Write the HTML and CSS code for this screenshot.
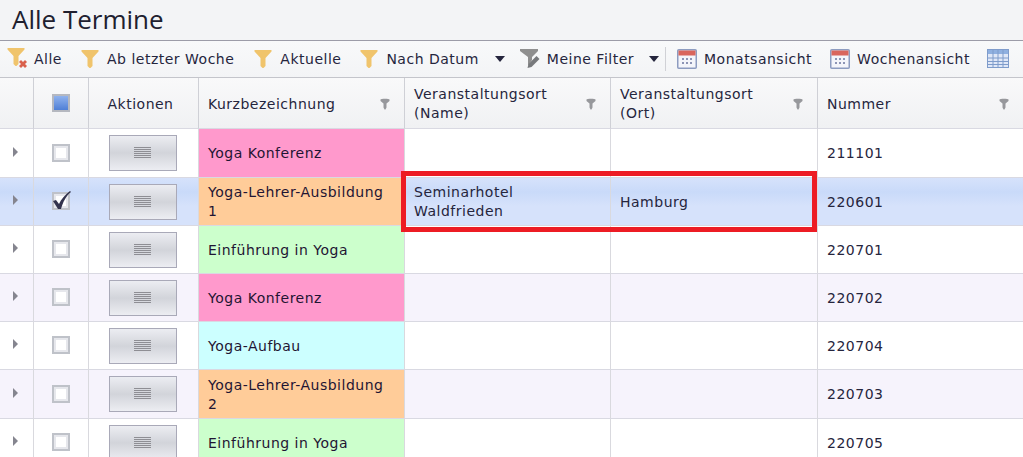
FILE: index.html
```html
<!DOCTYPE html>
<html>

<head>
    <meta charset="UTF-8">
    <title>Alle Termine</title>
    <link rel="stylesheet" href="styles.css">
</head>

<body>
    <svg class="defs" width="0" height="0">
        <symbol id="funnel" viewBox="0 0 18 20">
            <path d="M0.500 1h17v1.500l-6 6.500v8l-2 2h-1l-2-2v-8l-6-6.500z" fill="#f0c46c" />
        </symbol>
        <symbol id="cal" viewBox="0 0 20 20">
            <rect x="0.750" y="0.750" width="18.500" height="18.500" rx="1" fill="#f4f5fa" stroke="#8d9cc0" stroke-width="1.500" />
            <rect x="1.500" y="1.500" width="17" height="5" fill="#d9655c" />
            <path d="M5 9h2v2h-2zM9 9h2v2h-2zM13 9h2v2h-2zM5 13h2v2h-2zM9 13h2v2h-2zM13 13h2v2h-2z" fill="#8d94b5" />
        </symbol>
        <symbol id="lines" viewBox="0 0 17 12">
            <path d="M0 0h17v1h-17zM0 2h17v1h-17zM0 4h17v1h-17zM0 6h17v1h-17zM0 8h17v1h-17zM0 10h17v1h-17z" fill="#8e8e94" />
        </symbol>
        <symbol id="hfilter" viewBox="0 0 10 12">
            <path d="M0.500 1.500c0-1 9-1 9 0v1.500l-3 2.500v4l-1 2h-1l-1-2v-4l-3-2.500z" fill="#97989c" />
        </symbol>
    </svg>

    <div class="page">
        <h1 class="title">Alle Termine</h1>

        <div class="toolbar">
            <span class="tool tool-clear">
                <svg class="ico" width="22" height="24" viewBox="0 0 22 24">
                    <use href="#funnel" width="18" height="20" />
                    <path d="M12 15l2-2 2 2 2-2 2 2-2 2 2 2-2 2-2-2-2 2-2-2 2-2z" fill="#d9604c" />
                </svg>Alle
            </span>
            <span class="tool tool-woche"><svg class="ico" width="18" height="20"><use href="#funnel" /></svg>Ab letzter Woche</span>
            <span class="tool tool-akt"><svg class="ico" width="18" height="20"><use href="#funnel" /></svg>Aktuelle</span>
            <span class="tool tool-datum"><svg class="ico" width="18" height="20"><use href="#funnel" /></svg>Nach Datum</span>
            <span class="caret caret-a"></span>
            <span class="tool tool-meine">
                <svg class="ico" width="20" height="20" viewBox="0 0 20 20">
                    <path d="M0 0h18v2l-6 6v3l-4 6v-9l-8-6z" fill="#8f8f8f" />
                    <path d="M7.500 19l1-4 8-8 3 3-8 8z" fill="#77797c" />
                </svg>Meine Filter
            </span>
            <span class="caret caret-b"></span>
            <span class="sep"></span>
            <span class="tool tool-monat"><svg class="ico" width="20" height="20"><use href="#cal" /></svg>Monatsansicht</span>
            <span class="tool tool-wochen"><svg class="ico" width="20" height="20"><use href="#cal" /></svg>Wochenansicht</span>
            <svg class="grid-ico" width="22" height="20" viewBox="0 0 22 20">
                <rect x="0.500" y="0.500" width="21" height="18" fill="#dfe7f7" stroke="#7f9ccb" />
                <rect x="1" y="1" width="20" height="4" fill="#8fb0e0" />
                <path d="M1 9h20M1 12.500h20M1 15.500h20M6 1v18M11 1v18M16 1v18" stroke="#7f9ccb" fill="none" />
            </svg>
        </div>

        <table class="grid">
            <colgroup>
                <col class="c-exp">
                <col class="c-chk">
                <col class="c-act">
                <col class="c-kurz">
                <col class="c-name">
                <col class="c-ort">
                <col class="c-num">
            </colgroup>
            <thead>
                <tr>
                    <th></th>
                    <th class="center"><span class="chk chk-all"></span></th>
                    <th class="center th-act">Aktionen</th>
                    <th>Kurzbezeichnung<svg class="hf" width="10" height="12"><use href="#hfilter" /></svg></th>
                    <th>Veranstaltungsort<br>(Name)<svg class="hf" width="10" height="12"><use href="#hfilter" /></svg></th>
                    <th>Veranstaltungsort<br>(Ort)<svg class="hf" width="10" height="12"><use href="#hfilter" /></svg></th>
                    <th>Nummer<svg class="hf" width="10" height="12"><use href="#hfilter" /></svg></th>
                </tr>
            </thead>
            <tbody>
                <tr class="h49">
                    <td><span class="arrow"></span></td>
                    <td class="center"><span class="chk"></span></td>
                    <td class="center"><span class="btn"><svg width="17" height="12"><use href="#lines" /></svg></span></td>
                    <td class="pink">Yoga Konferenz</td>
                    <td></td>
                    <td></td>
                    <td>211101</td>
                </tr>
                <tr class="sel">
                    <td><span class="arrow"></span></td>
                    <td class="center">
                        <span class="chk">
                            <svg class="tick" width="20" height="20" viewBox="0 0 20 20"><path d="M1 10l3-1 3 4c2-5 6-9 11-13l1 1c-5 4-8 10-10 17h-3z" fill="#33334d" /></svg>
                        </span>
                    </td>
                    <td class="center"><span class="btn"><svg width="17" height="12"><use href="#lines" /></svg></span></td>
                    <td class="orange">Yoga-Lehrer-Ausbildung 1</td>
                    <td>Seminarhotel Waldfrieden</td>
                    <td>Hamburg</td>
                    <td>220601</td>
                </tr>
                <tr>
                    <td><span class="arrow"></span></td>
                    <td class="center"><span class="chk"></span></td>
                    <td class="center"><span class="btn"><svg width="17" height="12"><use href="#lines" /></svg></span></td>
                    <td class="green">Einführung in Yoga</td>
                    <td></td>
                    <td></td>
                    <td>220701</td>
                </tr>
                <tr class="alt">
                    <td><span class="arrow"></span></td>
                    <td class="center"><span class="chk"></span></td>
                    <td class="center"><span class="btn"><svg width="17" height="12"><use href="#lines" /></svg></span></td>
                    <td class="pink">Yoga Konferenz</td>
                    <td></td>
                    <td></td>
                    <td>220702</td>
                </tr>
                <tr>
                    <td><span class="arrow"></span></td>
                    <td class="center"><span class="chk"></span></td>
                    <td class="center"><span class="btn"><svg width="17" height="12"><use href="#lines" /></svg></span></td>
                    <td class="cyan">Yoga-Aufbau</td>
                    <td></td>
                    <td></td>
                    <td>220704</td>
                </tr>
                <tr class="alt h49">
                    <td><span class="arrow"></span></td>
                    <td class="center"><span class="chk"></span></td>
                    <td class="center"><span class="btn"><svg width="17" height="12"><use href="#lines" /></svg></span></td>
                    <td class="orange">Yoga-Lehrer-Ausbildung 2</td>
                    <td></td>
                    <td></td>
                    <td>220703</td>
                </tr>
                <tr>
                    <td><span class="arrow"></span></td>
                    <td class="center"><span class="chk"></span></td>
                    <td class="center"><span class="btn"><svg width="17" height="12"><use href="#lines" /></svg></span></td>
                    <td class="green">Einführung in Yoga</td>
                    <td></td>
                    <td></td>
                    <td>220705</td>
                </tr>
            </tbody>
        </table>

        <div class="mark"></div>
    </div>
</body>

</html>
```

FILE: styles.css
```css
html, body {
    margin: 0;
    height: 100%;
    overflow: hidden;
}

body {
    background: #f3f4f6;
    color: #25253d;
    font-family: "DejaVu Sans", sans-serif;
    font-size: 14px;
    letter-spacing: 0.5px;
}

.defs {
    display: block;
    height: 0;
}

.page {
    position: relative;
    width: 1023px;
    height: 457px;
    overflow: hidden;
}

.title {
    margin: 0;
    height: 40px;
    box-sizing: border-box;
    padding: 2px 0 0 12px;
    font-family: "Open Sans", sans-serif;
    font-weight: 400;
    font-size: 26px;
    line-height: 35px;
    letter-spacing: 0;
    color: #20202f;
}

.toolbar {
    display: flex;
    align-items: center;
    box-sizing: border-box;
    height: 38px;
    padding-left: 7px;
    border-top: 1px solid #9c9ca8;
    border-bottom: 1px solid #c4c5cb;
    background: linear-gradient(#f8f9fa, #f3f4f6);
    white-space: nowrap;
}

.tool {
    display: flex;
    align-items: center;
}

.ico {
    flex: none;
    margin-right: 8px;
}

.tool-clear .ico {
    margin-right: 5px;
}

.tool-woche {
    margin-left: 19px;
}

.tool-akt {
    margin-left: 20px;
}

.tool-datum {
    margin-left: 19px;
}

.tool-meine {
    margin-left: 15px;
}

.tool-meine .ico {
    margin-right: 7px;
}

.tool-monat {
    margin-left: 11px;
}

.tool-monat .ico,
.tool-wochen .ico {
    margin-right: 7px;
}

.tool-wochen {
    margin-left: 18px;
}

.grid-ico {
    margin-left: 17px;
}

.caret {
    width: 0;
    height: 0;
    border-left: 5px solid transparent;
    border-right: 5px solid transparent;
    border-top: 6px solid #25253d;
}

.caret-a {
    margin-left: 16px;
}

.caret-b {
    margin-left: 15px;
}

.sep {
    width: 1px;
    height: 24px;
    margin-left: 6px;
    background: #d0d1d6;
}

.grid {
    width: 1023px;
    table-layout: fixed;
    border-collapse: separate;
    border-spacing: 0;
    background: #fff;
}

.c-exp { width: 34px; }
.c-chk { width: 55px; }
.c-act { width: 110px; }
.c-kurz { width: 206px; }
.c-name { width: 206px; }
.c-ort { width: 207px; }

.grid th,
.grid td {
    box-sizing: border-box;
    padding: 1px 9px 0;
    border-right: 1px solid #d9d9de;
    border-bottom: 1px solid #d9d9e2;
    text-align: left;
    font-weight: 400;
    line-height: 19px;
    vertical-align: middle;
}

.grid th:last-child,
.grid td:last-child {
    border-right: 0;
}

.grid th {
    position: relative;
    height: 51px;
    padding-top: 2px;
    padding-right: 30px;
    background: linear-gradient(#f9f9fa, #f0f1f3);
    border-right-color: #cfd0d6;
}

.grid .center {
    padding: 0;
    text-align: center;
}

.grid .th-act {
    padding: 2px 6px 0 0;
}

.grid tbody tr {
    height: 48px;
}

.grid tbody tr.h49 {
    height: 49px;
}

.grid tr.alt td {
    background: #f6f3fc;
}

.grid tr.sel td {
    background: linear-gradient(#d6e2fb, #c9daf9 30%, #d6e2fb 60%);
}

.grid tbody td.pink { background: #ff99cc; color: #1f1533; }
.grid tbody td.orange { background: #ffcc99; color: #1f1533; }
.grid tbody td.green { background: #ccffcc; color: #1f1533; }
.grid tbody td.cyan { background: #ccffff; color: #1f1533; }

.hf {
    position: absolute;
    right: 14px;
    top: 20px;
}

.arrow {
    display: block;
    width: 0;
    height: 0;
    margin-left: 4px;
    margin-top: -4px;
    border-top: 5px solid transparent;
    border-bottom: 5px solid transparent;
    border-left: 5px solid #85858f;
}

.chk {
    position: relative;
    display: inline-block;
    box-sizing: border-box;
    width: 18px;
    height: 18px;
    margin-top: -2px;
    vertical-align: middle;
    background: #fff;
    border: 2px solid #bfc2c9;
    box-shadow: inset 0 0 0 2px #e6e7ec;
}

.chk-all {
    background: linear-gradient(#8fb2ee, #4f7fd6);
    border-color: #b5b8c0;
    box-shadow: none;
}

.tick {
    position: absolute;
    left: -2px;
    top: -3px;
}

.btn {
    display: inline-flex;
    align-items: center;
    justify-content: center;
    box-sizing: border-box;
    width: 68px;
    height: 36px;
    margin-right: 2px;
    vertical-align: middle;
    border: 1px solid #a9a9b8;
    background: linear-gradient(#ecedf2, #d2d4da 50%, #ecedf2);
}

.mark {
    position: absolute;
    left: 401px;
    top: 171px;
    width: 416px;
    height: 61px;
    box-sizing: border-box;
    border: 5px solid #ed1c24;
}
```
